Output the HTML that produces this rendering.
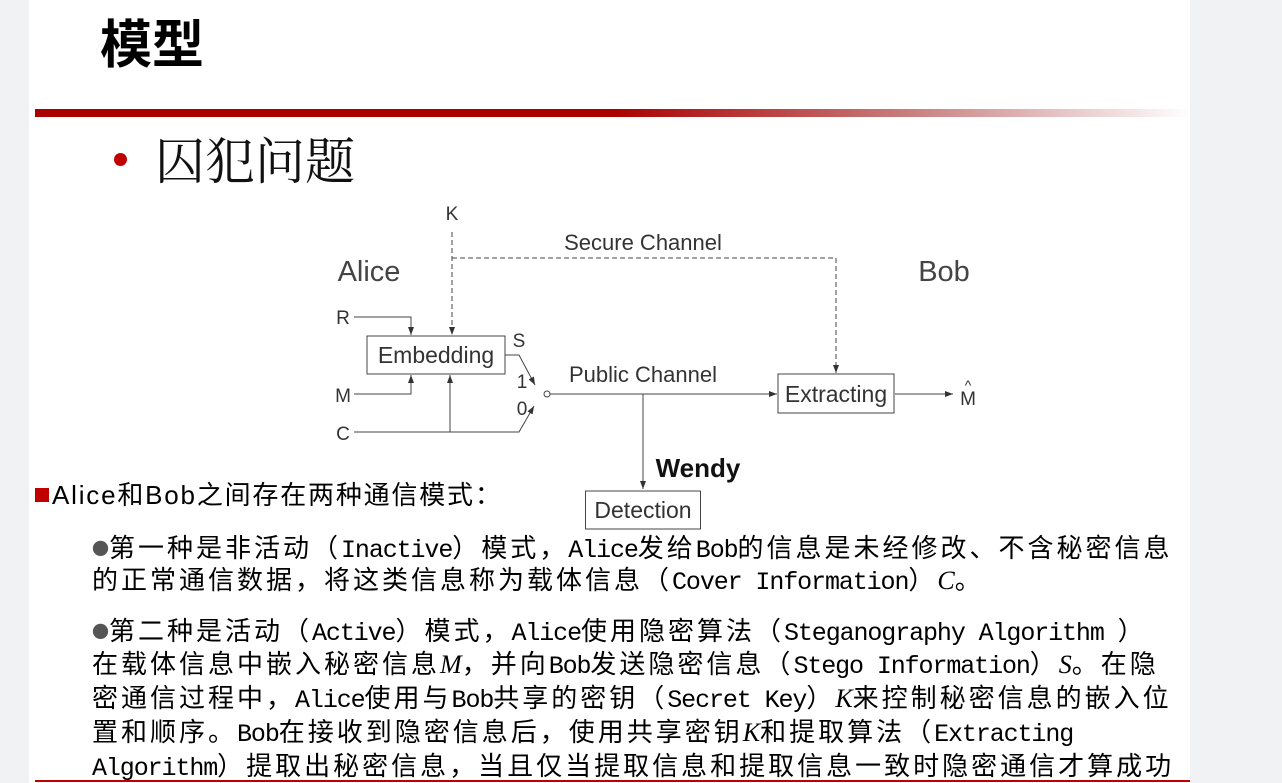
<!DOCTYPE html>
<html><head><meta charset="utf-8"><style>
html,body{margin:0;padding:0;}
body{width:1282px;height:783px;background:#f1f2f4;position:relative;overflow:hidden;font-family:"Liberation Sans","Noto Sans CJK SC",sans-serif;}
#slide{position:absolute;left:29px;top:0;width:1161px;height:783px;background:#fff;}
.abs{position:absolute;white-space:nowrap;}
.bar{position:absolute;left:35px;top:109px;width:1155px;height:8px;background:linear-gradient(to right,#aa0000 0%,#aa0000 50%,#c98080 76%,#fff 100%);}
.body{font-family:"Noto Sans CJK SC",sans-serif;font-size:26px;line-height:33px;height:33px;color:#000;left:92px;letter-spacing:3px;}
.body span{line-height:1;}
.l{font-family:"Liberation Mono",monospace;font-size:25px;letter-spacing:-1.1px;}
.m{font-family:"Liberation Serif",serif;font-style:italic;letter-spacing:0;}
.b{color:#555;letter-spacing:0;font-size:17px;vertical-align:2px;}
</style></head><body>
<div id="slide"></div>
<div class="abs" style="left:100px;top:8px;font-size:52px;font-weight:bold;font-family:'Noto Sans CJK SC',sans-serif;line-height:66px;">模型</div>
<div class="bar"></div>
<div class="abs" style="left:114px;top:153px;width:13px;height:13px;border-radius:50%;background:#c00000;"></div>
<div class="abs" style="left:155px;top:127px;font-size:50px;line-height:62px;font-family:'Noto Serif CJK SC',serif;color:#111;">囚犯问题</div>

<svg class="abs" style="left:0;top:0" width="1282" height="783" font-family="Liberation Sans,sans-serif" fill="#333">
<defs><marker id="a" markerWidth="8" markerHeight="6" refX="8" refY="3" orient="auto" markerUnits="userSpaceOnUse"><path d="M0,0L8,3L0,6z" fill="#333"/></marker></defs>
<g stroke="#444" stroke-width="1" fill="none">
<path d="M452,232V335" stroke-dasharray="5,3" marker-end="url(#a)"/>
<path d="M452,258H836V373" stroke-dasharray="5,3" marker-end="url(#a)"/>
<path d="M354,317H411V335" marker-end="url(#a)"/>
<path d="M354,394H411V375" marker-end="url(#a)"/>
<path d="M354,432H519L534,406" marker-end="url(#a)"/>
<path d="M450,432V375" marker-end="url(#a)"/>
<path d="M505,355H519L535,385" marker-end="url(#a)"/>
<circle cx="547" cy="394" r="3"/>
<path d="M550,394H777" marker-end="url(#a)"/>
<path d="M895,394H953" marker-end="url(#a)"/>
<path d="M643,394V489" marker-end="url(#a)"/>
<rect x="367" y="336" width="138" height="38"/>
<rect x="778" y="374" width="116" height="39"/>
<rect x="585.5" y="491" width="115" height="38"/>
</g>
<text x="452" y="220" font-size="19" text-anchor="middle">K</text>
<text x="643" y="250" font-size="22" text-anchor="middle">Secure Channel</text>
<text x="369" y="281" font-size="29" text-anchor="middle" fill="#444">Alice</text>
<text x="944" y="281" font-size="29" text-anchor="middle" fill="#444">Bob</text>
<text x="343" y="324" font-size="19" text-anchor="middle">R</text>
<text x="343" y="402" font-size="19" text-anchor="middle">M</text>
<text x="343" y="440" font-size="19" text-anchor="middle">C</text>
<text x="519" y="347" font-size="19" text-anchor="middle">S</text>
<text x="522" y="388" font-size="19" text-anchor="middle">1</text>
<text x="522" y="415" font-size="19" text-anchor="middle">0</text>
<text x="436" y="363" font-size="23" text-anchor="middle">Embedding</text>
<text x="643" y="382" font-size="22" text-anchor="middle">Public Channel</text>
<text x="836" y="402" font-size="23" text-anchor="middle">Extracting</text>
<text x="968" y="405" font-size="19" text-anchor="middle">M</text>
<text x="968" y="390" font-size="14" text-anchor="middle">^</text>
<text x="698" y="477" font-size="26" font-weight="bold" text-anchor="middle" fill="#111">Wendy</text>
<text x="643" y="518" font-size="23" text-anchor="middle">Detection</text>
</svg>

<div class="abs" style="left:35px;top:488px;width:14px;height:14px;background:#c00000;"></div>
<div class="abs" style="left:52px;top:478px;font-size:26px;line-height:34px;letter-spacing:1.8px;font-family:'Liberation Sans','Noto Sans CJK SC',sans-serif;">Alice和Bob之间存在两种通信模式：</div>

<div class="abs body" style="top:530px;"><span class="b">●</span>第一种是非活动（<span class="l">Inactive</span>）模式，<span class="l">Alice</span>发给<span class="l">Bob</span>的信息是未经修改、不含秘密信息</div>
<div class="abs body" style="top:562px;">的正常通信数据，将这类信息称为载体信息（<span class="l">Cover Information</span>）<span class="m">C</span>。</div>
<div class="abs body" style="top:613px;"><span class="b">●</span>第二种是活动（<span class="l">Active</span>）模式，<span class="l">Alice</span>使用隐密算法（<span class="l">Steganography Algorithm </span>）</div>
<div class="abs body" style="top:646px;">在载体信息中嵌入秘密信息<span class="m">M</span>，并向<span class="l">Bob</span>发送隐密信息（<span class="l">Stego Information</span>）<span class="m">S</span>。在隐</div>
<div class="abs body" style="top:680px;">密通信过程中，<span class="l">Alice</span>使用与<span class="l">Bob</span>共享的密钥（<span class="l">Secret Key</span>）<span class="m">K</span>来控制秘密信息的嵌入位</div>
<div class="abs body" style="top:714px;">置和顺序。<span class="l">Bob</span>在接收到隐密信息后，使用共享密钥<span class="m">K</span>和提取算法（<span class="l">Extracting</span></div>
<div class="abs body" style="top:748px;"><span class="l">Algorithm</span>）提取出秘密信息，当且仅当提取信息和提取信息一致时隐密通信才算成功</div>
<div class="abs" style="left:35px;top:780px;width:1155px;height:2px;background:#c00000;"></div>
</body></html>
